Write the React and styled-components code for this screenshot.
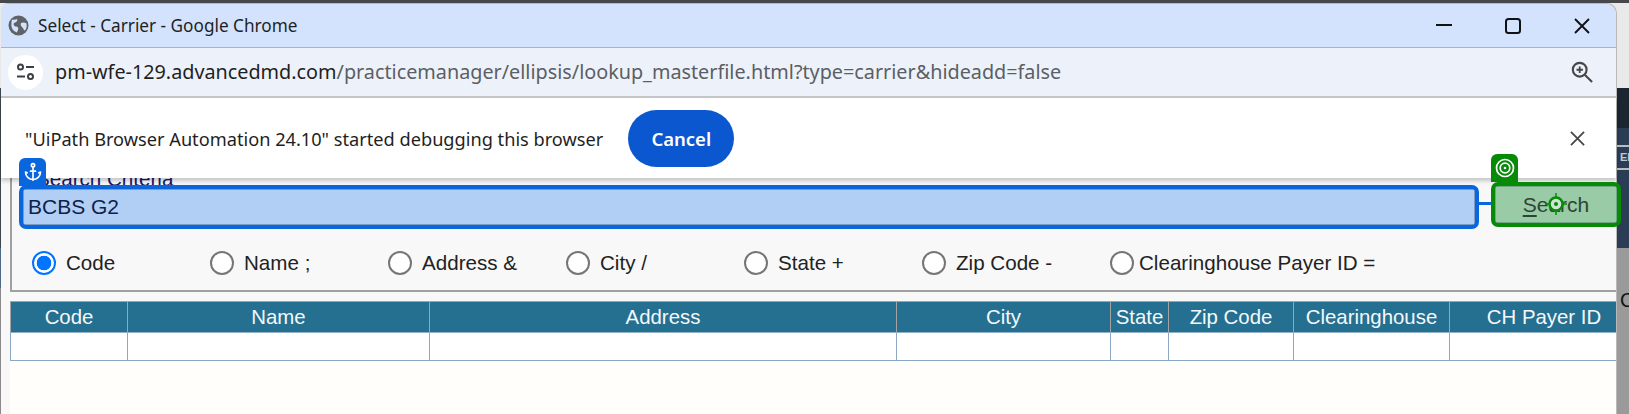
import React from "react";
import styled, { createGlobalStyle } from "styled-components";
import { Anchor } from "lucide-react";

const GlobalStyle = createGlobalStyle`
  html, body {
    margin: 0;
    padding: 0;
    height: 100%;
    overflow: hidden;
    background: #8e8e8e;
  }
`;

const uiFont = `"Noto Sans", "Open Sans", sans-serif`;
const pageFont = `"Liberation Sans", Arial, sans-serif`;

const Desktop = styled.div`
  display: flex;
  width: 1629px;
  height: 414px;
  overflow: hidden;
  border-top: 3px solid #45474b;
  box-sizing: border-box;
  background: #e9e9e9;
`;

const LeftEdge = styled.div`
  width: 1px;
  flex: none;
  background: linear-gradient(
    #e9e9e9 0 85px,
    #3b4651 85px 245px,
    #4f6884 245px 285px,
    #8a8a8a 285px
  );
`;

const Window = styled.div`
  width: 1615px;
  flex: none;
  height: 411px;
  margin-top: 1px;
  display: flex;
  flex-direction: column;
  position: relative;
  background: #f8f8f8;
  border-top-right-radius: 10px;
  border-top-left-radius: 6px;
  box-shadow: 1px -1px 0 #b9b9b9;
`;

const TitleBar = styled.div`
  height: 43px;
  flex: none;
  display: flex;
  align-items: center;
  padding-left: 7px;
  background: #d3e3fd;
  border-bottom: 1px solid #b0b3b8;
  border-top-right-radius: 10px;
  border-top-left-radius: 6px;
`;

const Title = styled.span`
  margin-left: 9px;
  font: 400 17.2px ${uiFont};
  color: #1f1f1f;
  white-space: nowrap;
`;

const WindowControls = styled.div`
  margin-left: auto;
  display: flex;
  align-items: center;
`;

const ControlSlot = styled.span`
  width: 69px;
  display: flex;
  justify-content: center;
  align-items: center;
`;

const Toolbar = styled.div`
  height: 48px;
  flex: none;
  display: flex;
  align-items: center;
  padding: 0 23px 0 7px;
  background: #edf2fa;
  border-bottom: 2px solid #c4c6c9;
`;

const SiteChip = styled.span`
  width: 35px;
  height: 35px;
  border-radius: 50%;
  background: #fff;
  display: flex;
  align-items: center;
  justify-content: center;
  flex: none;
`;

const Url = styled.span`
  margin-left: 12px;
  padding-bottom: 2px;
  font: 400 19.8px ${uiFont};
  color: #5b5e63;
  white-space: nowrap;
  b {
    font-weight: 400;
    color: #1f1f1f;
  }
`;

const ToolbarIcon = styled.span`
  margin-left: auto;
  display: flex;
`;

const InfoBar = styled.div`
  position: absolute;
  left: 0;
  right: 0;
  top: 94px;
  height: 80px;
  z-index: 2;
  display: flex;
  align-items: center;
  padding: 1px 24px 0;
  box-sizing: border-box;
  background: #fff;
  box-shadow: 0 3px 4px rgba(0, 0, 0, 0.2);
`;

const InfoText = styled.span`
  font: 400 18.2px ${uiFont};
  color: #1f1f1f;
  white-space: nowrap;
`;

const CancelButton = styled.button`
  width: 106px;
  height: 57px;
  margin-left: 25px;
  border: 0;
  border-radius: 29px;
  background: #0b57d0;
  color: #fff;
  font: 600 18.5px ${uiFont};
`;

const CloseInfo = styled.span`
  margin-left: auto;
  margin-right: 7px;
  display: flex;
`;

const Page = styled.div`
  flex: 1;
  min-height: 0;
  display: flex;
  flex-direction: column;
  font-family: ${pageFont};
  color: #222;
`;

const Criteria = styled.div`
  margin: 0 0 0 9px;
  padding-left: 1px;
  height: 194px;
  flex: none;
  box-sizing: border-box;
  border-left: 2px solid #a0a0a0;
  border-bottom: 2px solid #a0a0a0;
  display: flex;
  flex-direction: column;
  justify-content: flex-end;
`;

const Legend = styled.div`
  margin-left: 23px;
  margin-bottom: -3px;
  font-size: 20.6px;
  line-height: 20px;
  color: #17176b;
`;

const SearchRow = styled.div`
  display: flex;
  align-items: flex-start;
  height: 50px;
  box-sizing: border-box;
  padding: 3px 0 0 10px;
`;

const HighlightedField = styled.div`
  position: relative;
  width: ${(p) => p.$width}px;
  height: ${(p) => p.$height}px;
  margin-left: ${(p) => p.$gap || 0}px;
  margin-top: ${(p) => p.$shift || 0}px;
  flex: none;
`;

const Highlight = styled.div`
  position: absolute;
  inset: -4px;
  z-index: 3;
  border: 4px solid ${(p) => p.$color};
  border-radius: 7px;
  pointer-events: none;
`;

const Badge = styled.div`
  position: absolute;
  left: -4px;
  top: ${(p) => p.$top}px;
  z-index: 3;
  width: 27px;
  height: 28px;
  display: flex;
  align-items: center;
  justify-content: center;
  background: ${(p) => p.$color};
  color: #fff;
  border-radius: 6px 6px 0 0;
`;

const Connector = styled.div`
  position: absolute;
  right: -17px;
  top: 13px;
  z-index: 3;
  width: 13px;
  height: 3px;
  background: #0a66dd;
`;

const Input = styled.input`
  width: 100%;
  height: 100%;
  box-sizing: border-box;
  padding: 0 0 0 4px;
  border: 1px solid #7b9cc7;
  background: #b1cff5;
  color: #0f2148;
  font: 400 21px ${pageFont};
  outline: none;
`;

const SearchButton = styled.button`
  width: 100%;
  height: 100%;
  padding: 0;
  box-sizing: border-box;
  border: 1px solid #70a883;
  background: #98cba6;
  color: #2f4436;
  font: 400 21px ${pageFont};
  u {
    text-underline-offset: 3px;
  }
`;

const TargetMark = styled.svg`
  position: absolute;
  left: 50px;
  top: 7px;
  z-index: 4;
`;

const Options = styled.div`
  display: grid;
  grid-template-columns: repeat(5, 178px) 188px auto;
  align-items: center;
  height: 54px;
  padding-left: 19px;
`;

const Option = styled.label`
  display: flex;
  align-items: center;
  gap: ${(p) => (p.$tight ? 5 : 10)}px;
  font-size: 20.6px;
  white-space: nowrap;
`;

const Radio = styled.input.attrs({ type: "radio", name: "by" })`
  appearance: none;
  margin: 0;
  width: 24px;
  height: 24px;
  box-sizing: border-box;
  border-radius: 50%;
  border: 2px solid #767676;
  background: #fff;
  &:checked {
    border-color: #0075ff;
    background: radial-gradient(circle, #0075ff 0 7px, #fff 7.6px);
  }
`;

const Gutter = styled.div`
  height: 9px;
  flex: none;
`;

const Results = styled.div`
  flex: 1;
  margin-left: 9px;
  overflow: hidden;
  background: #fffefa;
`;

const Table = styled.table`
  table-layout: fixed;
  border-collapse: collapse;
  width: 1628px;
  font-size: 20.4px;
`;

const Head = styled.th`
  height: 30px;
  padding: 0;
  font-weight: 400;
  line-height: 24px;
  color: #f4f8fa;
  background: #256f90;
  border: 1px solid #a3a3a3;
  border-bottom-color: #8fb0c8;
  text-align: center;
  white-space: nowrap;
`;

const Cell = styled.td`
  height: 27px;
  padding: 0;
  background: #fff;
  border: 1px solid #8aa8c4;
`;

const RightEdge = styled.div`
  flex: 1;
  display: flex;
  flex-direction: column;
  font-family: ${pageFont};
`;

const EdgeBlock = styled.div`
  height: ${(p) => p.$height}px;
  flex: ${(p) => (p.$fill ? 1 : "none")};
  background: ${(p) => p.$color};
  overflow: hidden;
  white-space: nowrap;
`;

const EdgeRule = styled.div`
  height: 2px;
  margin-top: ${(p) => p.$top}px;
  background: #b8bec6;
`;

const EdgeLabel = styled.div`
  margin-top: ${(p) => p.$top}px;
  font-size: ${(p) => p.$size}px;
  font-weight: ${(p) => p.$weight || 400};
  line-height: 1;
  color: ${(p) => p.$color};
  padding-left: 4px;
`;

const columns = [
  ["Code", 117],
  ["Name", 302],
  ["Address", 467],
  ["City", 214],
  ["State", 58],
  ["Zip Code", 125],
  ["Clearinghouse", 156],
  ["CH Payer ID", 189],
];

const searchBy = [
  "Code",
  "Name ;",
  "Address &",
  "City /",
  "State +",
  "Zip Code -",
  "Clearinghouse Payer ID =",
];

const Globe = () => (
  <svg width="21" height="21" viewBox="0 0 21 21">
    <circle cx="10.5" cy="10.5" r="10" fill="#5f6368" />
    <path
      d="M4 4.5c2 .5 4 0 5-.5 1 1.500-.5 3-2 3.500S5 9.500 6.500 11c1 1 2.500 0 3.500 1.500s-.5 3-1 5c-3-1-5-3-5.500-6-.2-2.500 0-5 .500-7zM13 8c2-1 4-.5 5.500.5.500 2.500 0 5-1.500 7-1.500-.5-1.500-2-2.500-3S12 10 13 8z"
      fill="#d3e3fd"
    />
  </svg>
);

const TuneIcon = () => (
  <svg width="20" height="18" viewBox="0 0 20 18" fill="none" stroke="#3c4043" strokeWidth="2">
    <circle cx="4.500" cy="4" r="2.500" />
    <path d="M10 4h8M1 13.500h8" />
    <circle cx="14.500" cy="13.500" r="2.500" />
  </svg>
);

const ZoomIcon = () => (
  <svg width="22" height="22" viewBox="0 0 24 24" fill="none" stroke="#474747" strokeWidth="2.300">
    <circle cx="9.500" cy="9.500" r="7.500" />
    <path d="M15 15l8 8" />
    <path d="M9.500 6v7M6 9.500h7" strokeWidth="2" />
  </svg>
);

const CloseIcon = ({ size, color, width }) => (
  <svg width={size} height={size} viewBox="0 0 16 16" stroke={color} strokeWidth={width} fill="none">
    <path d="M1 1l14 14M15 1L1 15" />
  </svg>
);

const Bullseye = () => (
  <svg width="20" height="20" viewBox="0 0 20 20" fill="none" stroke="#fff" strokeWidth="1.700">
    <circle cx="10" cy="10" r="8.500" />
    <circle cx="10" cy="10" r="4.800" />
    <circle cx="10" cy="10" r="1.300" fill="#fff" stroke="none" />
  </svg>
);

const App = () => {
  return (
    <>
      <GlobalStyle />
      <Desktop>
        <LeftEdge />
        <Window>
          <TitleBar>
            <Globe />
            <Title>Select - Carrier - Google Chrome</Title>
            <WindowControls>
              <ControlSlot>
                <svg width="16" height="3" viewBox="0 0 16 3">
                  <rect width="16" height="2" fill="#111" />
                </svg>
              </ControlSlot>
              <ControlSlot>
                <svg width="16" height="16" viewBox="0 0 16 16" fill="none" stroke="#111" strokeWidth="2">
                  <rect x="1" y="1" width="14" height="14" rx="2.500" />
                </svg>
              </ControlSlot>
              <ControlSlot>
                <CloseIcon size={16} color="#111" width={1.9} />
              </ControlSlot>
            </WindowControls>
          </TitleBar>
          <Toolbar>
            <SiteChip>
              <TuneIcon />
            </SiteChip>
            <Url>
              <b>pm-wfe-129.advancedmd.com</b>
              /practicemanager/ellipsis/lookup_masterfile.html?type=carrier&amp;hideadd=false
            </Url>
            <ToolbarIcon>
              <ZoomIcon />
            </ToolbarIcon>
          </Toolbar>
          <InfoBar>
            <InfoText>"UiPath Browser Automation 24.10" started debugging this browser</InfoText>
            <CancelButton>Cancel</CancelButton>
            <CloseInfo>
              <CloseIcon size={15} color="#474747" width={1.9} />
            </CloseInfo>
          </InfoBar>
          <Page>
            <Criteria>
              <Legend>Search Criteria</Legend>
              <SearchRow>
                <HighlightedField $width={1452} $height={36}>
                  <Input defaultValue="BCBS G2" />
                  <Highlight $color="#0a66dd" />
                  <Badge $color="#0a66dd" $top={-31}>
                    <Anchor size={20} strokeWidth={2} />
                  </Badge>
                  <Connector />
                </HighlightedField>
                <HighlightedField $width={122} $height={37} $gap={20} $shift={-3}>
                  <SearchButton>
                    <u>S</u>earch
                  </SearchButton>
                  <Highlight $color="#078a07" />
                  <Badge $color="#078a07" $top={-32}>
                    <Bullseye />
                  </Badge>
                  <TargetMark width="22" height="22" viewBox="0 0 22 22" fill="none">
                    <circle cx="11" cy="11" r="6.500" stroke="#078a07" strokeWidth="2.500" fill="#cfe5d4" />
                    <circle cx="11" cy="11" r="2" fill="#078a07" />
                    <path d="M11 0v4M11 18v4M0 11h4M18 11h4" stroke="#078a07" strokeWidth="1.500" />
                  </TargetMark>
                </HighlightedField>
              </SearchRow>
              <Options>
                {searchBy.map((label, i) => (
                  <Option key={label} $tight={i === 6}>
                    <Radio defaultChecked={i === 0} />
                    {label}
                  </Option>
                ))}
              </Options>
            </Criteria>
            <Gutter />
            <Results>
              <Table>
                <colgroup>
                  {columns.map(([name, width]) => (
                    <col key={name} width={width} />
                  ))}
                </colgroup>
                <thead>
                  <tr>
                    {columns.map(([name]) => (
                      <Head key={name}>{name}</Head>
                    ))}
                  </tr>
                </thead>
                <tbody>
                  <tr>
                    {columns.map(([name]) => (
                      <Cell key={name} />
                    ))}
                  </tr>
                </tbody>
              </Table>
            </Results>
          </Page>
        </Window>
        <RightEdge>
          <EdgeBlock $height={85} $color="#e9e9e9" />
          <EdgeBlock $height={40} $color="#1c2630" />
          <EdgeBlock $height={120} $color="#2a3d54">
            <EdgeRule $top={17} />
            <EdgeLabel $top={5} $size={11} $weight={700} $color="#c3c8d0">EI</EdgeLabel>
            <EdgeRule $top={5} />
          </EdgeBlock>
          <EdgeBlock $fill $color="#9a9a9a">
            <EdgeLabel $top={42} $size={20} $color="#111">C</EdgeLabel>
          </EdgeBlock>
        </RightEdge>
      </Desktop>
    </>
  );
};

export default App;
